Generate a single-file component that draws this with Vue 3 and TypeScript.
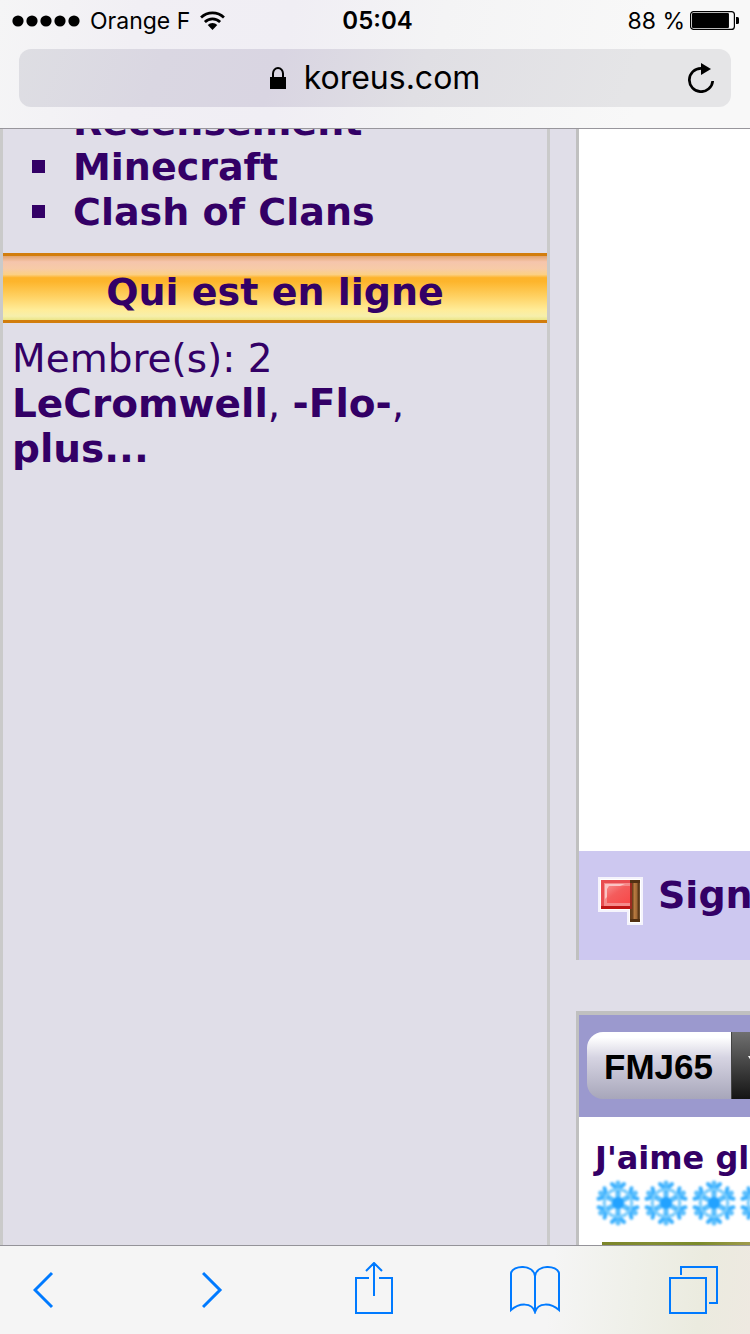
<script setup lang="ts">
import { ref } from 'vue'

interface ForumLink {
  label: string
}

const forums: ForumLink[] = [
  { label: 'Recensement' },
  { label: 'Minecraft' },
  { label: 'Clash of Clans' },
]
const members: string[] = ['LeCromwell', '-Flo-']
const battery = ref(88)
const arms: number[] = [0, 60, 120, 180, 240, 300]
</script>

<template>
  <div class="screen">
    <header class="chrome">
      <div class="status">
        <div class="carrier">
          <svg class="signal" viewBox="0 0 68 12" aria-hidden="true">
            <circle v-for="n in 5" :key="n" :cx="14 * n - 8" cy="6" r="5.6" />
          </svg>
          <span>Orange F</span>
          <svg class="wifi" viewBox="0 0 24 18" aria-hidden="true">
            <path d="M1 6.200a15.800 15.800 0 0 1 22 0M4.700 10.400a10.400 10.400 0 0 1 14.600 0" fill="none" stroke="#000" stroke-width="2.600" />
            <path d="M7.400 13.200a6.600 6.600 0 0 1 9.200 0L12 18z" />
          </svg>
        </div>
        <time class="clock">05:04</time>
        <div class="power">
          <span>{{ battery }} %</span>
          <svg class="battery" viewBox="0 0 49 19" aria-hidden="true">
            <rect x="0.6" y="0.6" width="43.8" height="17.8" rx="3" fill="none" stroke="#000" stroke-width="1.2" />
            <rect x="2" y="2" :width="battery * 0.42" height="15" rx="1" />
            <path d="M46 6h1.500q1.500 0 1.500 1.500v4q0 1.500-1.500 1.500H46z" />
          </svg>
        </div>
      </div>
      <div class="address">
        <button class="url" type="button">
          <svg class="lock" viewBox="0 0 16 22" aria-hidden="true">
            <path d="M0 10h16v12H0z" />
            <path d="M3 10.500V6.500a5 5.500 0 0 1 10 0v4" fill="none" stroke="#000" stroke-width="2" />
          </svg>
          <span>koreus.com</span>
        </button>
        <button class="reload" type="button" aria-label="Recharger">
          <svg viewBox="0 0 26 30" aria-hidden="true">
            <path d="M13 5.300A11.700 11.700 0 1 0 24.700 18" fill="none" stroke="#000" stroke-width="2.700" />
            <path d="M13 0l10 6-10 6z" />
          </svg>
        </button>
      </div>
    </header>

    <main class="page">
      <aside class="sidebar">
        <ul class="forums">
          <li v-for="forum in forums" :key="forum.label"><a href="#">{{ forum.label }}</a></li>
        </ul>
        <h2 class="heading">Qui est en ligne</h2>
        <p class="online">
          Membre(s): {{ members.length }}<br />
          <template v-for="name in members" :key="name"><a href="#">{{ name }}</a>, </template><br />
          <a href="#">plus...</a>
        </p>
      </aside>

      <div class="feed">
        <article class="post first">
          <div class="post-space"></div>
          <footer class="report">
            <svg class="flag" viewBox="0 0 45 48" aria-hidden="true">
              <defs>
                <linearGradient id="cloth" x1="0" y1="0" x2="1" y2="1">
                  <stop offset="0" stop-color="#f88888" />
                  <stop offset="0.4" stop-color="#f45c5c" />
                  <stop offset="1" stop-color="#f84848" />
                </linearGradient>
                <linearGradient id="pole">
                  <stop offset="0" stop-color="#623b18" />
                  <stop offset="0.25" stop-color="#71451f" />
                  <stop offset="0.45" stop-color="#b77a40" />
                  <stop offset="0.65" stop-color="#a46a36" />
                  <stop offset="0.85" stop-color="#5d3918" />
                  <stop offset="1" stop-color="#755737" />
                </linearGradient>
              </defs>
              <path d="M0 0h45v48H29V35H0z" fill="#fff" opacity="0.8" />
              <path d="M2 2h41v44H31V33H2z" fill="#fff" />
              <path d="M3 3h30v29H3z" fill="#e84c50" />
              <path d="M3 29h30v3H3z" fill="#c01414" />
              <path d="M6 6h27v23H6z" fill="#f58a8a" />
              <path d="M9 9h24v17H9z" fill="url(#cloth)" />
              <path d="M7 7h20l-5 2H11l-2 3v8l-2 2z" fill="#fbc4c4" />
              <path d="M32 3h10v42H32z" fill="url(#pole)" />
              <path d="M32 3h10v3H32zM32 42h10v3H32z" fill="#523012" />
              <path d="M32 6h2v26h-2z" fill="#9b2a20" />
            </svg>
            <a href="#">Sign</a>
          </footer>
        </article>

        <article class="post second">
          <header class="author">
            <button class="name" type="button">FMJ65</button>
            <button class="more" type="button" aria-label="Profil">
              <svg viewBox="0 0 24 20" aria-hidden="true"><path d="M0 0h24L12 20z" fill="#fff" /></svg>
            </button>
          </header>
          <div class="message">
            <h3>J'aime gl</h3>
            <div class="flakes">
              <svg v-for="n in 4" :key="n" class="flake" viewBox="-24 -24 48 48" aria-hidden="true">
                <g v-for="angle in arms" :key="angle" :transform="`rotate(${angle})`" fill="none" stroke-linecap="round">
                  <path d="M0 0V-20" stroke="#5cbffd" stroke-width="5" />
                  <path d="M-6-19L0-13l6-6" stroke="#3db1fe" stroke-width="4" />
                  <path d="M-7-12L0-14l7 2" stroke="#7ccdfd" stroke-width="3" />
                </g>
                <circle r="6" fill="#22a2ff" />
              </svg>
            </div>
            <div class="picture"></div>
          </div>
        </article>
      </div>
    </main>

    <nav class="toolbar" aria-label="Navigation">
      <button class="back" type="button" aria-label="Précédent">
        <svg width="21" height="52" viewBox="0 0 21 52"><path d="M19 11L2 28 19 45" /></svg>
      </button>
      <button class="forward" type="button" aria-label="Suivant">
        <svg width="21" height="52" viewBox="0 0 21 52"><path d="M1 11l17 17L1 45" /></svg>
      </button>
      <button class="share" type="button" aria-label="Partager">
        <svg width="38" height="52" viewBox="0 0 38 52"><path class="thin" d="M14 16H1v35h36V16H24M19 34V1M11 9l8-8 8 8" /></svg>
      </button>
      <button class="book" type="button" aria-label="Signets">
        <svg width="50" height="52" viewBox="0 0 50 52"><path class="thin" d="M25 50V14C23 2 3 3 1 11v37c8-7 21-8 24 2 3-10 16-9 24-2V11C47 3 27 2 25 14" /></svg>
      </button>
      <button class="tabs" type="button" aria-label="Onglets">
        <svg width="49" height="52" viewBox="0 0 49 52"><path class="thin" d="M1 16h36v35H1zM12 13V5h36v36h-8" /></svg>
      </button>
    </nav>
  </div>
</template>

<style>
body {
  margin: 0;
}
</style>

<style scoped>
* {
  box-sizing: border-box;
}
.screen {
  display: flex;
  flex-direction: column;
  height: 100vh;
  overflow: hidden;
  background: #e0dee8;
  color: #330066;
  font-family: Verdana, "DejaVu Sans", sans-serif;
  font-size: 38px;
  line-height: 45px;
}
button {
  margin: 0;
  padding: 0;
  border: 0;
  background: none;
  color: inherit;
  font: inherit;
}
svg {
  display: block;
  flex: none;
}
a {
  color: inherit;
  font-weight: bold;
  text-decoration: none;
}
.chrome {
  flex: none;
  padding: 0 19px 21px;
  border-bottom: 1px solid #98969c;
  background: linear-gradient(100deg, #f5f5f6 0%, #f1eff4 18%, #f0eef4 38%, #f4f4f5 58%, #f8f8f8 85%);
  color: #000;
  font-family: Inter, "Liberation Sans", sans-serif;
}
.status {
  display: grid;
  grid-template-columns: 1fr auto 1fr;
  align-items: center;
  height: 49px;
  margin: 0 -8px 0 -7px;
  padding: 0 0 8px;
  font-size: 23px;
  line-height: 28px;
}
.carrier,
.power {
  display: flex;
  align-items: center;
}
.carrier {
  gap: 10px;
}
.power {
  justify-content: flex-end;
  gap: 5px;
}
.signal {
  width: 68px;
  height: 12px;
}
.wifi {
  width: 25px;
  height: 19px;
}
.battery {
  width: 49px;
  height: 19px;
}
.clock {
  padding-left: 4px;
  font-size: 24px;
  font-weight: 600;
}
.address {
  display: grid;
  grid-template-columns: 1fr auto 1fr;
  align-items: center;
  height: 58px;
  padding: 0 17px;
  border-radius: 12px;
  background: linear-gradient(110deg, #dedee3 0%, #dad7e2 20%, #d9d5e2 36%, #e0dfe4 56%, #e5e5e7 85%);
}
.url {
  display: flex;
  grid-column: 2;
  align-items: center;
  gap: 18px;
  font-size: 32px;
  line-height: 40px;
}
.lock {
  width: 16px;
  height: 22px;
}
.reload {
  justify-self: end;
}
.reload svg {
  width: 26px;
  height: 30px;
}
.page {
  display: grid;
  flex: 1;
  grid-template-columns: 11fr 4fr;
  min-height: 0;
  overflow: hidden;
}
.sidebar {
  min-width: 0;
  border: solid #cacaca;
  border-width: 0 3px;
}
.forums {
  margin: -29px 0 18px;
  padding: 0 0 0 29px;
  list-style: none;
}
.forums li {
  display: flex;
  align-items: center;
  gap: 28px;
}
.forums li::before {
  content: "";
  width: 13px;
  height: 13px;
  margin-bottom: 2px;
  background: #330066;
}
.heading {
  margin: 0;
  padding: 14px 0 5px;
  border: solid #d27d0c;
  border-width: 3px 0;
  background: linear-gradient(#e3a46c 0%, #f5c5ac 9%, #f7cba7 20%, #fcd083 29%, #fdb32a 34%, #fdb52c 40%, #ffd162 63%, #ffec98 84%, #f6efac 94%, #ece586 100%);
  font-size: 38px;
  text-align: center;
}
.online {
  margin: 0;
  padding: 13px 9px;
  font-size: 39px;
}
.feed {
  display: flex;
  flex-direction: column;
  gap: 51px;
  min-width: 0;
  margin-left: 26px;
  overflow: hidden;
  white-space: nowrap;
}
.post {
  border-left: 3px solid #c0c0c0;
  background: #fff;
}
.first {
  display: flex;
  flex: 1;
  flex-direction: column;
}
.post-space {
  flex: 1;
}
.report {
  display: flex;
  align-items: flex-start;
  gap: 15px;
  height: 109px;
  padding: 22px 0 0 19px;
  background: #cdc8f0;
}
.flag {
  width: 45px;
  height: 48px;
  margin-top: 4px;
}
.second {
  flex: none;
  border-top: 4px solid #c0c0c0;
}
.author {
  display: flex;
  height: 102px;
  padding: 17px 0 18px 8px;
  background: #9b99ce;
}
.name {
  padding: 2px 18px 0 17px;
  border-radius: 16px 0 0 16px;
  background: linear-gradient(#fff 0%, #fff 8%, #d6d4e2 38%, #a7a6ba 100%);
  color: #000;
  font-family: "Liberation Sans", Arial, sans-serif;
  font-size: 35px;
  font-weight: bold;
}
.more {
  flex: none;
  padding: 0 16px;
  border-left: 1px solid #444;
  background: linear-gradient(#707070, #141414);
}
.more svg {
  width: 24px;
  height: 20px;
}
.message {
  padding: 20px 0 0 16px;
}
.message h3 {
  margin: 0;
  font-size: 32px;
  line-height: 42px;
}
.flakes {
  display: flex;
}
.flake {
  width: 48px;
  height: 48px;
  margin: 0 1px 0 -1px;
  filter: blur(1px);
}
.picture {
  height: 3px;
  margin: 15px 0 0 7px;
  background: linear-gradient(90deg, #7c8529, #828d33 35%, #7b8b2a 65%, #a09b4c);
}
.toolbar {
  display: flex;
  flex: none;
  align-items: flex-start;
  justify-content: space-between;
  height: 89px;
  padding: 16px 32px 0 33px;
  border-top: 1px solid #949399;
  background: linear-gradient(96deg, #f5f5f5 73%, #eff0e9 84%, #ebebdf 93%, #eee9e1 100%);
}
.toolbar path {
  fill: none;
  stroke: #007aff;
  stroke-width: 3;
}
.toolbar .thin {
  stroke-width: 2;
}
.back {
  width: 60px;
}
.forward {
  width: 44px;
}
.share {
  width: 46px;
}
</style>
